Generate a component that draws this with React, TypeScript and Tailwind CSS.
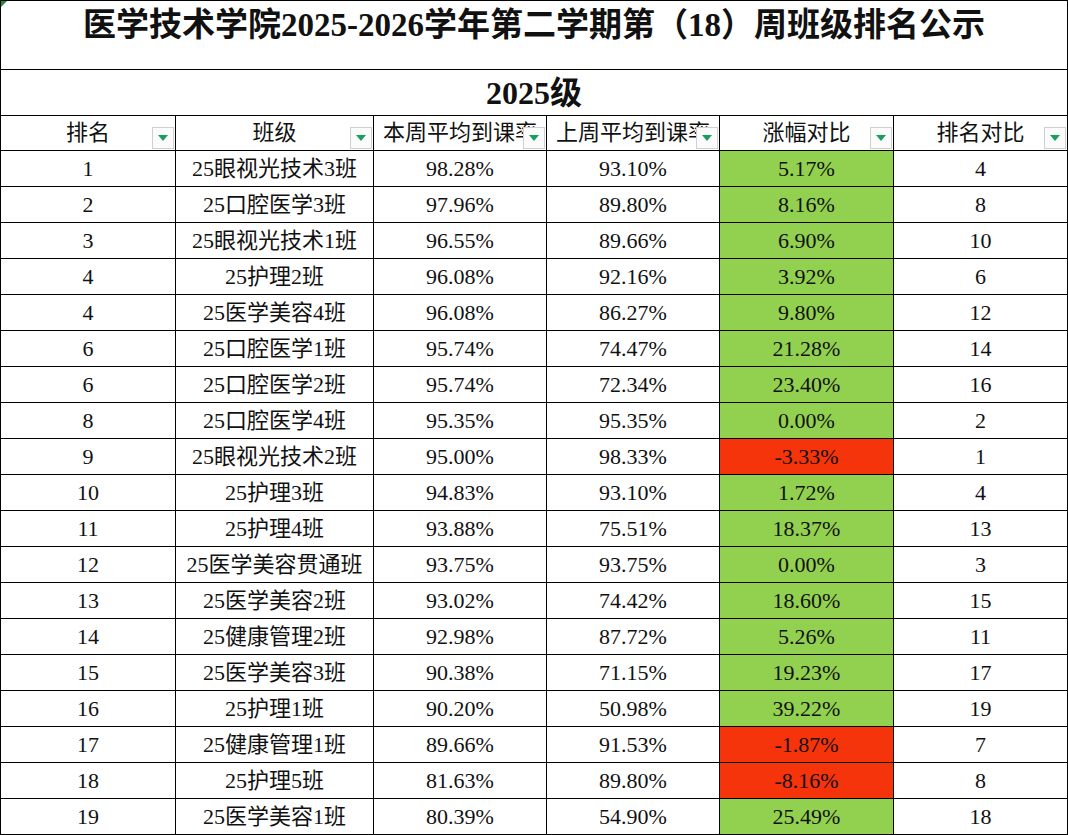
const rows: [string, string, string, string, string, string][] = [
  ["1", "25眼视光技术3班", "98.28%", "93.10%", "5.17%", "4"],
  ["2", "25口腔医学3班", "97.96%", "89.80%", "8.16%", "8"],
  ["3", "25眼视光技术1班", "96.55%", "89.66%", "6.90%", "10"],
  ["4", "25护理2班", "96.08%", "92.16%", "3.92%", "6"],
  ["4", "25医学美容4班", "96.08%", "86.27%", "9.80%", "12"],
  ["6", "25口腔医学1班", "95.74%", "74.47%", "21.28%", "14"],
  ["6", "25口腔医学2班", "95.74%", "72.34%", "23.40%", "16"],
  ["8", "25口腔医学4班", "95.35%", "95.35%", "0.00%", "2"],
  ["9", "25眼视光技术2班", "95.00%", "98.33%", "-3.33%", "1"],
  ["10", "25护理3班", "94.83%", "93.10%", "1.72%", "4"],
  ["11", "25护理4班", "93.88%", "75.51%", "18.37%", "13"],
  ["12", "25医学美容贯通班", "93.75%", "93.75%", "0.00%", "3"],
  ["13", "25医学美容2班", "93.02%", "74.42%", "18.60%", "15"],
  ["14", "25健康管理2班", "92.98%", "87.72%", "5.26%", "11"],
  ["15", "25医学美容3班", "90.38%", "71.15%", "19.23%", "17"],
  ["16", "25护理1班", "90.20%", "50.98%", "39.22%", "19"],
  ["17", "25健康管理1班", "89.66%", "91.53%", "-1.87%", "7"],
  ["18", "25护理5班", "81.63%", "89.80%", "-8.16%", "8"],
  ["19", "25医学美容1班", "80.39%", "54.90%", "25.49%", "18"],
];

const headers = ["排名", "班级", "本周平均到课率", "上周平均到课率", "涨幅对比", "排名对比"];

const FilterButton = () => (
  <span className="absolute right-[1px] bottom-[1px] flex h-[22px] w-[22px] items-center justify-center border border-[#cfcfcf] bg-[#fbfbfb]">
    <svg width="10" height="6" viewBox="0 0 10 6">
      <polygon points="0,0 10,0 5,6" fill="#16a05d" />
    </svg>
  </span>
);

const App = () => {
  return (
    <div
      className="relative h-[835px] w-[1068px] overflow-hidden bg-white text-[#111]"
      style={{ fontFamily: '"Liberation Serif", "Noto Sans CJK SC", serif' }}
    >
      <div className="border-l border-t border-black">
        {/* title */}
        <div className="relative flex h-[69px] justify-center border-b border-r border-black pt-[2px] text-[33px] font-bold leading-[44px]">
          <span className="absolute left-0 top-0 h-0 w-0 border-r-[6px] border-t-[6px] border-r-transparent border-t-[#1e8b3e]" />
          医学技术学院2025-2026学年第二学期第（18）周班级排名公示
        </div>
        <div className="flex h-[46px] items-center justify-center border-b border-r border-black text-[32px] font-bold">
          2025级
        </div>
        <div className="grid grid-cols-[175px_198px_173px_173px_174px_174px]">
          {headers.map((h) => (
            <div
              key={h}
              className="relative flex h-[35px] items-center justify-center overflow-hidden whitespace-nowrap border-b border-r border-black text-[22px] leading-none"
            >
              <span className="pb-[1px]">{h}</span>
              <FilterButton />
            </div>
          ))}
          {rows.map((r, i) =>
            r.map((c, j) => {
              const bg =
                j === 4 ? (c.startsWith("-") ? "bg-[#f5340b]" : "bg-[#92d050]") : "bg-white";
              return (
                <div
                  key={`${i}-${j}`}
                  className={`flex h-[36px] items-center justify-center whitespace-nowrap border-b border-r border-black text-[22px] leading-none ${bg}`}
                >
                  {c}
                </div>
              );
            })
          )}
        </div>
      </div>
    </div>
  );
};

export default App;
